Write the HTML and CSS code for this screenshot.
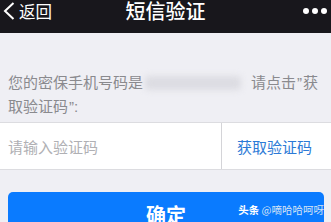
FILE: index.html
```html
<!DOCTYPE html>
<html lang="zh">
<head>
<meta charset="utf-8">
<link rel="stylesheet" href="styles.css">
</head>
<body>
<div class="header">
  <div class="back">
    <svg class="chev" width="12" height="18" viewBox="0 0 12 18"><path d="M10.5 1 L2 9 L10.5 17" fill="none" stroke="#fff" stroke-width="2"/></svg>
    <span>返回</span>
  </div>
  <div class="title">短信验证</div>
  <div class="dots"><i></i><i></i><i></i></div>
</div>
<div class="info">您的密保手机号码是<span class="blur"></span>请点击<span class="q">”</span>获<br>取验证码<span class="q">”:</span></div>
<div class="row">
  <div class="input">请输入验证码</div>
  <div class="get">获取验证码</div>
</div>
<div class="btnwrap">
  <div class="btn">确定</div>
  <div class="wm"><b>头条</b> @嘀哈哈呵呀</div>
</div>
</body>
</html>
```
FILE: styles.css
```css
html, body { margin: 0; padding: 0; }
body {
  background: #efeff4;
  font-family: "Noto Sans CJK SC", "Noto Sans", sans-serif;
  width: 331px; height: 222px; overflow: hidden;
}
.header {
  height: 33px;
  background: #18171c;
  display: flex;
  align-items: flex-start;
  justify-content: space-between;
  color: #fff;
  position: relative;
}
.back {
  display: flex; align-items: center;
  padding-left: 3px; height: 22px;
  font-size: 16.5px;
}
.back span { margin-left: 4px; line-height: 22px; }
.title {
  position: absolute; left: 0; right: 0; top: 0;
  text-align: center; font-size: 20px; line-height: 22px;
  font-weight: 500;
}
.dots { display: flex; gap: 3px; padding: 8px 4px 0 0; }
.dots i { width: 6px; height: 6px; border-radius: 50%; background: #fff; display: block; }
.info {
  padding: 37px 8px 0 8px;
  font-size: 15px; line-height: 23px;
  color: #8a8a8e;
  white-space: nowrap;
}
.q { font-family: "Liberation Sans", sans-serif; margin: 0 1px; }
.blur {
  display: inline-block; width: 96px; height: 14px;
  margin: 0 10px 0 2px; vertical-align: -2px;
  background: #dcdce2; filter: blur(3px); border-radius: 4px;
}
.row {
  margin-top: 4px;
  height: 46px;
  background: #fff;
  border-top: 1px solid #dcdce0;
  border-bottom: 1px solid #dcdce0;
  display: flex;
}
.input {
  width: 213px; padding-left: 8px;
  border-right: 1px solid #d4d4d8;
  font-size: 15px; color: #b0b0b4;
  display: flex; align-items: center;
}
.get {
  flex: 1; display: flex; align-items: center; justify-content: center;
  font-size: 15px; color: #2c7ad6; padding-right: 4px;
}
.btnwrap { position: relative; padding: 22px 7px 0 8px; }
.btn {
  height: 21px; padding-top: 11px; background: #0a7bff;
  border-radius: 5px 5px 0 0; overflow: hidden;
  color: #fff; font-size: 20px; font-weight: 700;
  text-align: center; line-height: 24px;
}
.wm {
  position: absolute; right: 7px; top: 34px;
  font-size: 10.5px; color: #d6e4f5; line-height: 12px;
}
.wm b { color: #fff; }
```
